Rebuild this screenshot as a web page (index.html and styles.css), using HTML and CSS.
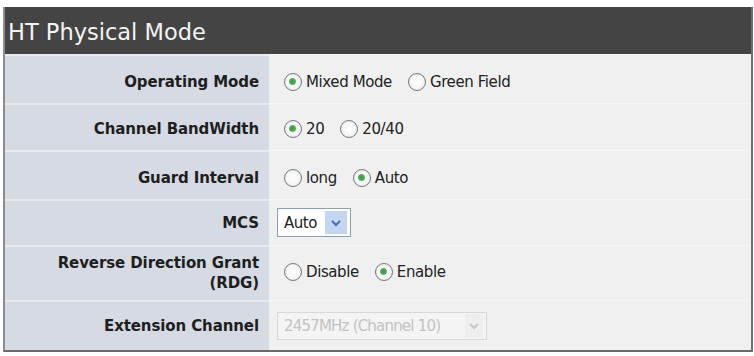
FILE: index.html
```html
<!DOCTYPE html>
<html>
<head>
<meta charset="utf-8">
<link rel="stylesheet" href="styles.css">
</head>
<body>
<div class="panel">
  <div class="head">HT Physical Mode</div>
  <div class="grid">
    <div class="lab r1">Operating Mode</div>
    <div class="val r1">
      <span class="opt"><span class="radio on"></span>Mixed Mode</span>
      <span class="opt"><span class="radio"></span>Green Field</span>
    </div>
    <div class="lab r2">Channel BandWidth</div>
    <div class="val r2">
      <span class="opt"><span class="radio on"></span>20</span>
      <span class="opt"><span class="radio"></span>20/40</span>
    </div>
    <div class="lab r3">Guard Interval</div>
    <div class="val r3">
      <span class="opt"><span class="radio"></span>long</span>
      <span class="opt"><span class="radio on"></span>Auto</span>
    </div>
    <div class="lab r4">MCS</div>
    <div class="val r4">
      <span class="sel"><span class="seltext">Auto</span><span class="arrow"><svg width="12" height="8" viewBox="0 0 12 8"><path d="M2 2 L6 6 L10 2" fill="none" stroke="#4a6fb0" stroke-width="2"/></svg></span></span>
    </div>
    <div class="lab r5">Reverse Direction Grant<br>(RDG)</div>
    <div class="val r5">
      <span class="opt"><span class="radio"></span>Disable</span>
      <span class="opt"><span class="radio on"></span>Enable</span>
    </div>
    <div class="lab r6">Extension Channel</div>
    <div class="val r6">
      <span class="sel dis"><span class="seltext">2457MHz (Channel 10)</span><span class="arrow"><svg width="12" height="8" viewBox="0 0 12 8"><path d="M2 2 L6 6 L10 2" fill="none" stroke="#c8c8c8" stroke-width="2"/></svg></span></span>
    </div>
  </div>
</div>
</body>
</html>
```
FILE: styles.css
```css
html, body { margin: 0; padding: 0; background: #fff; }
body { width: 754px; height: 356px; overflow: hidden; }
.panel {
  margin: 7px 1px 0 3px;
  border-left: 2px solid #8c8c8c;
  border-right: 2px solid #6e6e6e;
  border-bottom: 2px solid #6a6a6a;
  background: #f0f0f0;
}
.head {
  height: 47px;
  background: #444444;
  color: #f4f4f4;
  font-family: "DejaVu Sans", Verdana, sans-serif;
  font-size: 22.5px;
  line-height: 50px;
  padding-left: 3px;
}
.grid {
  display: grid;
  grid-template-columns: 264px 1fr;
  grid-template-rows: 49px 47px 49px 46px 55px 50px;
}
.lab {
  background: #d5dae3;
  border-top: 2px solid #e7eaef;
  font-family: "DejaVu Sans", Verdana, sans-serif;
  font-weight: bold;
  font-size: 15px;
  color: #1e1e1e;
  text-align: right;
  padding-right: 10px;
  display: flex;
  flex-direction: column;
  justify-content: center;
  align-items: flex-end;
  line-height: 20px;
  letter-spacing: -0.1px;
}
.val {
  border-top: 1px solid #f6f6f6;
  display: flex;
  align-items: center;
  padding-left: 15px;
  gap: 16px;
  font-family: "DejaVu Sans", Tahoma, sans-serif;
  font-size: 15px;
  color: #222;
}
.r1, .r3 { padding-top: 5px; box-sizing: border-box; }
.r2 { padding-top: 3px; box-sizing: border-box; }
.r5 { padding-bottom: 2px; box-sizing: border-box; }
.opt { display: inline-flex; align-items: center; gap: 4px; letter-spacing: -0.4px; }
.radio {
  width: 18px; height: 18px;
  box-sizing: border-box;
  border-radius: 50%;
  border: 1.5px solid #6f7a80;
  background: radial-gradient(circle at 50% 50%, #ffffff 0%, #f4f4f4 60%, #d8d8d8 100%);
  position: relative;
}
.radio.on::after {
  content: "";
  position: absolute;
  left: 4px; top: 4px;
  width: 7px; height: 7px;
  border-radius: 50%;
  background: radial-gradient(circle at 50% 50%, #3f9a45 0%, #4fa955 55%, #a8dcaa 100%);
}
.val.r4, .val.r6 { padding-left: 8px; }
.sel {
  display: inline-flex;
  align-items: center;
  height: 29px;
  box-sizing: border-box;
  border: 1px solid #8aa0b8;
  background: #fff;
  padding: 0 3px 0 6px;
  gap: 8px;
}
.seltext { font-size: 15px; letter-spacing: -0.5px; }
.arrow {
  width: 22px; height: 23px;
  background: #c3d5f0;
  display: inline-flex; align-items: center; justify-content: center;
}
.sel.dis { border-color: #d8d8d8; background: #f4f4f4; color: #c2c2c2; width: 210px; height: 28px; justify-content: space-between; }
.sel.dis .seltext { letter-spacing: -0.8px; }
.sel.dis .arrow { background: #eeeeee; width: 18px; }
```
